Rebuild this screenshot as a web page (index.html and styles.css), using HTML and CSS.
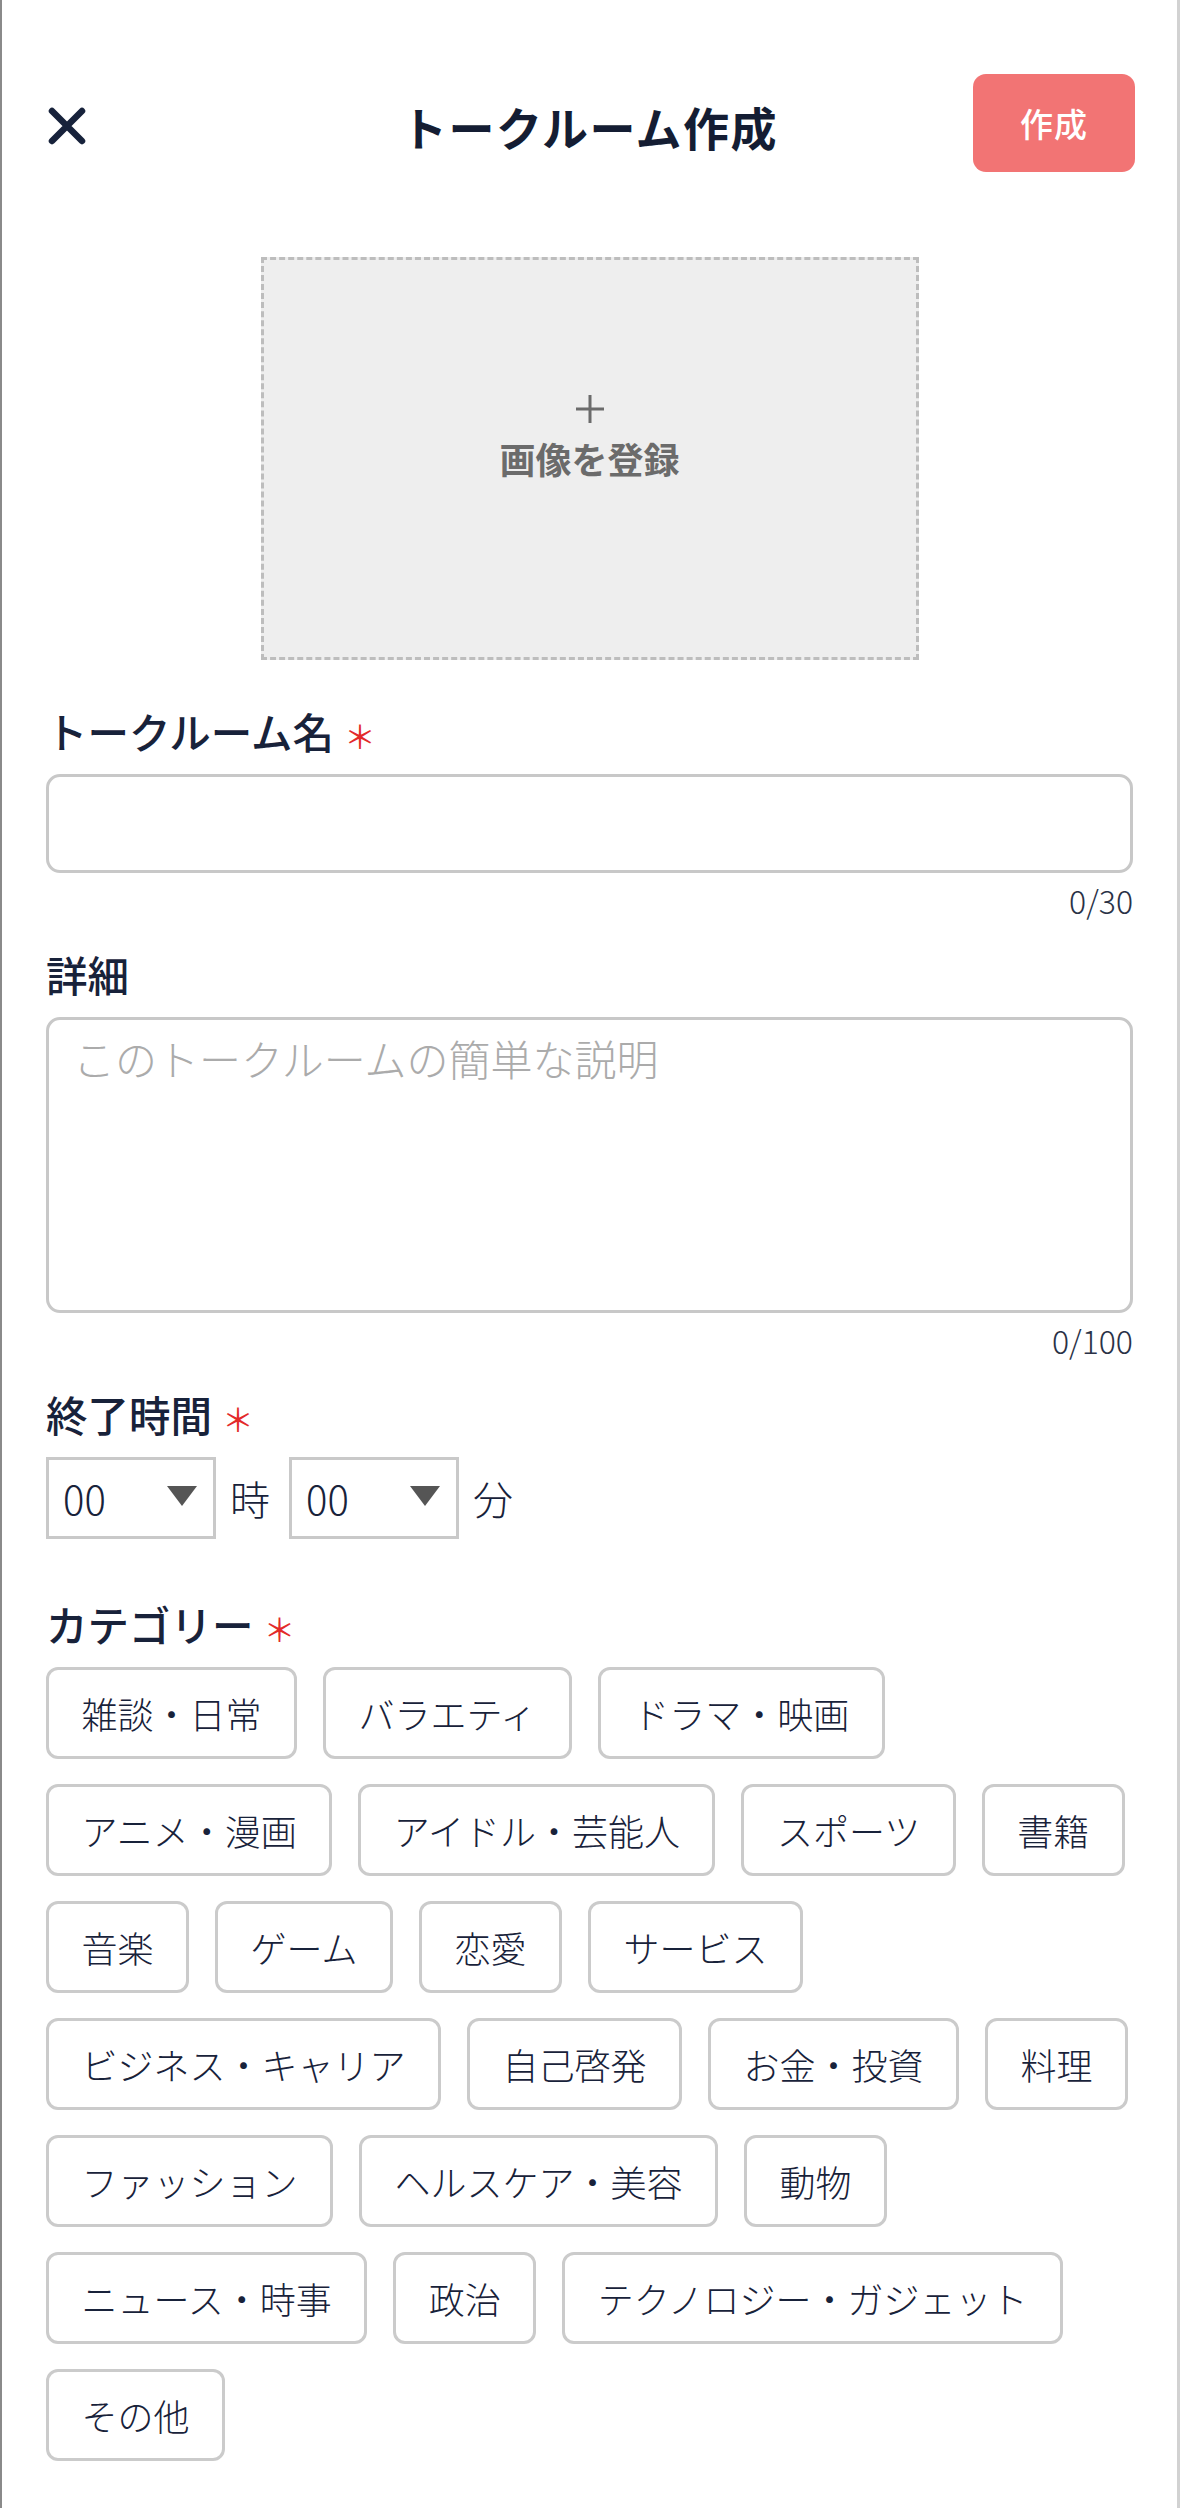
FILE: index.html
```html
<!DOCTYPE html>
<html lang="ja">
<head>
<meta charset="utf-8">
<title>トークルーム作成</title>
<link rel="stylesheet" href="styles.css">
</head>
<body>
<div class="page">
  <header class="header">
    <button class="close" aria-label="閉じる">
      <svg width="38" height="38" viewBox="0 0 38 38"><path d="M4 4L34 34M34 4L4 34" stroke="#17223b" stroke-width="6.5" stroke-linecap="round" fill="none"/></svg>
    </button>
    <h1 class="title">トークルーム作成</h1>
    <button class="create">作成</button>
  </header>

  <div class="image-box">
    <svg class="plus" width="28" height="28" viewBox="0 0 28 28"><path d="M14 0V28M0 14H28" stroke="#6b6b6b" stroke-width="3" fill="none"/></svg>
    <div class="image-text">画像を登録</div>
  </div>

  <div class="field first">
    <div class="label">トークルーム名<span class="req">＊</span></div>
    <input class="text-input" type="text">
    <div class="counter">0/30</div>
  </div>

  <div class="field">
    <div class="label">詳細</div>
    <textarea class="text-area" placeholder="このトークルームの簡単な説明"></textarea>
    <div class="counter">0/100</div>
  </div>

  <div class="field">
    <div class="label">終了時間<span class="req">＊</span></div>
    <div class="time-row">
      <div class="select"><span>00</span><span class="tri"></span></div>
      <span class="unit">時</span>
      <div class="select"><span>00</span><span class="tri"></span></div>
      <span class="unit">分</span>
    </div>
  </div>

  <div class="field category">
    <div class="label">カテゴリー<span class="req">＊</span></div>
    <div class="tags">
      <span class="tag">雑談・日常</span>
      <span class="tag">バラエティ</span>
      <span class="tag">ドラマ・映画</span>
      <span class="tag">アニメ・漫画</span>
      <span class="tag">アイドル・芸能人</span>
      <span class="tag">スポーツ</span>
      <span class="tag">書籍</span>
      <span class="tag">音楽</span>
      <span class="tag">ゲーム</span>
      <span class="tag">恋愛</span>
      <span class="tag">サービス</span>
      <span class="tag">ビジネス・キャリア</span>
      <span class="tag">自己啓発</span>
      <span class="tag">お金・投資</span>
      <span class="tag">料理</span>
      <span class="tag">ファッション</span>
      <span class="tag">ヘルスケア・美容</span>
      <span class="tag">動物</span>
      <span class="tag">ニュース・時事</span>
      <span class="tag">政治</span>
      <span class="tag">テクノロジー・ガジェット</span>
      <span class="tag">その他</span>
    </div>
  </div>
</div>
</body>
</html>
```
FILE: styles.css
```css
html, body {
  margin: 0;
  padding: 0;
  background: #ffffff;
}
body {
  font-family: "Noto Sans CJK JP", "Noto Sans", sans-serif;
  color: #18223a;
}
.page {
  width: 1180px;
  min-height: 2508px;
  box-sizing: border-box;
  border-left: 2px solid #8a8a8a;
  border-right: 3px solid #d2d2d2;
  padding: 0 44px;
}
.header {
  display: grid;
  grid-template-columns: 1fr auto 1fr;
  align-items: center;
  padding-top: 74px;
  height: 98px;
}
.close {
  justify-self: start;
  margin-left: 2px;
  padding: 0;
  border: 0;
  background: none;
  width: 38px;
  height: 38px;
  display: flex;
  margin-top: 6px;
}
.title {
  margin: 0;
  font-size: 46px;
  font-weight: 700;
  letter-spacing: 1.5px;
  line-height: 60px;
  color: #141d33;
  margin-top: 6px;
}
.create {
  justify-self: end;
  width: 162px;
  height: 98px;
  border: 0;
  border-radius: 13px;
  background: #f27474;
  color: #ffffff;
  font-family: "Noto Sans CJK JP", sans-serif;
  font-size: 33px;
  font-weight: 500;
  letter-spacing: 1px;
  margin-right: -2px;
  padding: 0;
}
.image-box {
  width: 658px;
  height: 403px;
  box-sizing: border-box;
  margin: 85px auto 0;
  border: 3px dashed #bdbdbd;
  background: #eeeeee;
  display: flex;
  flex-direction: column;
  align-items: center;
  justify-content: center;
  padding-bottom: 40px;
}
.plus {
  display: block;
  margin-bottom: 10px;
}
.image-text {
  font-size: 36px;
  font-weight: 700;
  line-height: 50px;
  color: #6b6b6b;
}
.field {
  margin-top: 20px;
}
.field.first {
  margin-top: 41px;
}
.field.category {
  margin-top: 55px;
}
.label {
  font-size: 41.5px;
  line-height: 60px;
  font-weight: 500;
  margin-bottom: 13px;
}
.req {
  color: #e32a2a;
  font-size: 32px;
  line-height: 1;
  font-weight: 400;
  margin-left: 10px;
}
.text-input,
.text-area {
  display: block;
  width: 100%;
  box-sizing: border-box;
  border: 3px solid #c8c8c8;
  border-radius: 14px;
  background: #fff;
  font-family: "Noto Sans CJK JP", sans-serif;
  font-weight: 300;
  color: #18223a;
  outline: none;
  margin: 0;
}
.text-input {
  height: 99px;
  font-size: 42px;
  padding: 0 24px;
}
.text-area {
  height: 296px;
  font-size: 42px;
  line-height: 60px;
  padding: 8px 24px;
  resize: none;
}
.text-area::placeholder {
  color: #ababab;
}
.counter {
  text-align: right;
  font-size: 32px;
  font-weight: 300;
  line-height: 48px;
  margin-top: 3px;
  color: #2a3247;
}
.time-row {
  display: flex;
  align-items: center;
}
.select {
  width: 170px;
  height: 82px;
  box-sizing: border-box;
  border: 3px solid #c9c9c9;
  display: flex;
  align-items: center;
  justify-content: space-between;
  padding: 0 16px 0 14px;
  font-size: 40px;
  font-weight: 300;
}
.tri {
  width: 0;
  height: 0;
  border-left: 15px solid transparent;
  border-right: 15px solid transparent;
  border-top: 20px solid #555555;
  margin-top: -4px;
}
.unit {
  font-size: 40px;
  font-weight: 300;
  margin: 0 19px 0 14px;
}
.tags {
  display: flex;
  flex-wrap: wrap;
  gap: 25px 26px;
}
.tag {
  height: 92px;
  box-sizing: border-box;
  border: 3px solid #cbcbcb;
  border-radius: 12px;
  padding: 0 32.5px;
  display: flex;
  align-items: center;
  font-size: 36px;
  font-weight: 300;
  white-space: nowrap;
}
```
